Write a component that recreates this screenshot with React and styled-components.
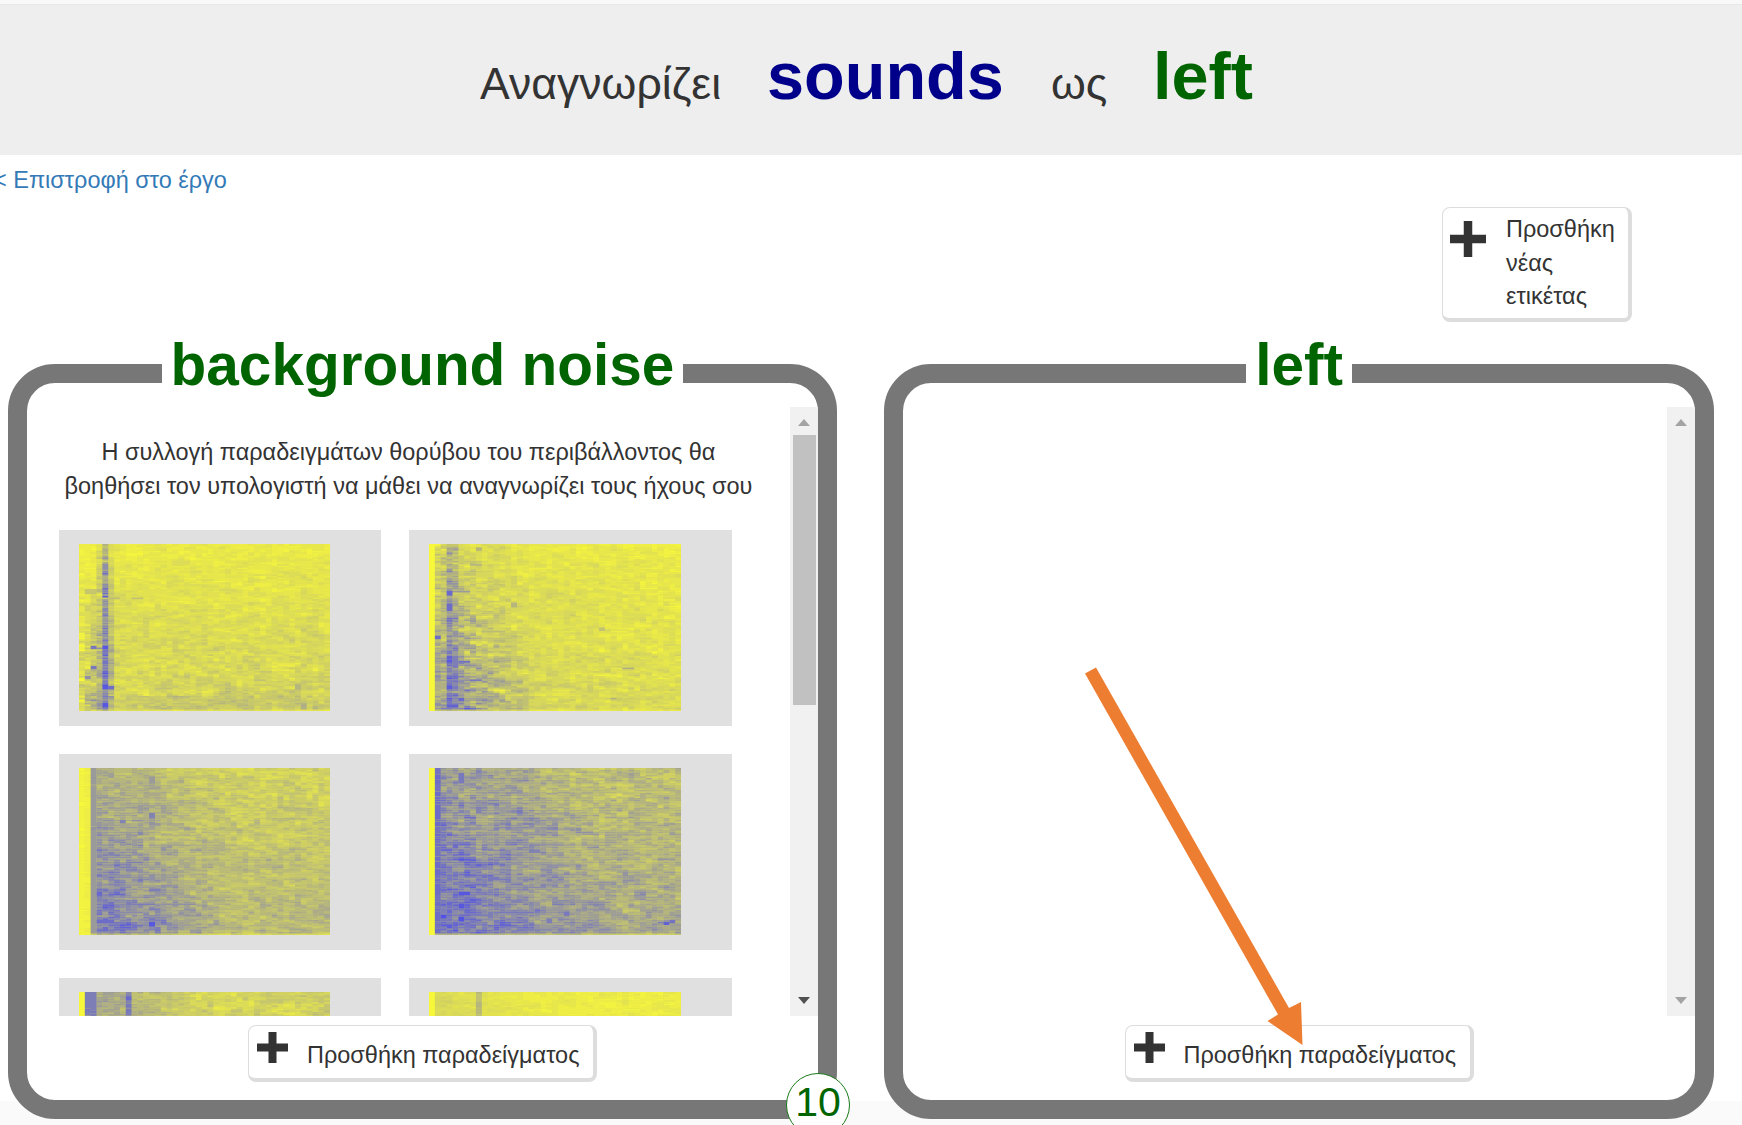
import React from "react";
import styled, { createGlobalStyle } from "styled-components";

const GlobalStyle = createGlobalStyle`
  * { box-sizing: border-box; }
  html, body { margin: 0; padding: 0; background: #fafafa; overflow: hidden; }
  body {
    font-family: "Liberation Sans", Arial, sans-serif;
    font-size: 23.48px;
    line-height: 33.5px;
    color: #333;
  }
`;

const Page = styled.div`
  position: relative;
  width: 1742px;
  height: 1125px;
  overflow: hidden;
`;

const NavEdge = styled.div`
  height: 5px;
  background: #f8f8f8;
  border-bottom: 1px solid #e7e7e7;
`;

const Banner = styled.header`
  display: flex;
  align-items: baseline;
  height: 150px;
  padding: 24px 0 0 480px;
  background: #eee;
  white-space: nowrap;
  line-height: 94px;
`;

const Plain = styled.span`
  font-size: 44.6px;
  width: ${(p) => p.$width}px;
`;

const Strong = styled.strong`
  font-size: 66.6px;
  width: ${(p) => p.$width}px;
  color: ${(p) => p.$color};
`;

const Body = styled.main`
  height: 946px;
  background: #fff;
`;

const BackRow = styled.div`
  height: 52px;
  padding-top: 9px;
`;

const BackLink = styled.a`
  display: inline-block;
  margin-left: -7px;
  color: #337ab7;
  text-decoration: none;
  white-space: nowrap;
`;

const Actions = styled.div`
  display: flex;
  justify-content: flex-end;
  height: 133px;
  padding-right: 110px;
`;

const Button = styled.button`
  display: flex;
  align-items: flex-start;
  width: ${(p) => p.$width}px;
  height: ${(p) => p.$height}px;
  padding: ${(p) => p.$padding};
  gap: ${(p) => p.$gap}px;
  border: 1.5px solid #ddd;
  border-right-width: 4px;
  border-bottom-width: 4px;
  border-radius: 8px;
  background: #fff;
  color: #333;
  font: inherit;
  text-align: left;
`;

const PlusSvg = styled.svg`
  display: block;
  flex: none;
  margin-top: ${(p) => p.$top}px;
`;

const ButtonText = styled.span`
  width: ${(p) => p.$width}px;
  padding-top: ${(p) => p.$top || 0}px;
  white-space: ${(p) => (p.$wrap ? "normal" : "nowrap")};
`;

const Columns = styled.div`
  display: grid;
  grid-template-columns: 829px 830px;
  gap: 47px;
  padding-left: 8px;
`;

const Bucket = styled.fieldset`
  position: relative;
  height: 779px;
  min-width: 0;
  margin: 0;
  padding: 0;
  border: 19px solid #777;
  border-radius: 47px;
`;

const BucketTitle = styled.legend`
  margin: 0 auto;
  padding: 0 9px 17px;
  font-size: 58.5px;
  font-weight: bold;
  line-height: 50px;
  color: #006400;
`;

const ScrollArea = styled.div`
  display: flex;
  height: 609px;
  overflow: hidden;
`;

const ScrollContent = styled.div`
  flex: 1;
  padding-top: 29px;
`;

const Hint = styled.p`
  margin: 0;
  text-align: center;
  white-space: pre-line;
`;

const SampleGrid = styled.div`
  display: grid;
  grid-template-columns: 322px 323px;
  gap: 28px 28px;
  padding: 27px 0 0 32px;
`;

const Sample = styled.div`
  height: 196px;
  padding: 14px 20px;
  background: #e0e0e0;
`;

const Spectrum = styled.svg`
  display: block;
`;

const Track = styled.div`
  display: flex;
  flex-direction: column;
  align-items: center;
  width: 28px;
  padding: 12px 0;
  background: #f1f1f1;
`;

const Arrow = styled.svg`
  display: block;
  flex: none;
  margin-top: ${(p) => (p.$last ? "auto" : "0")};
`;

const Thumb = styled.div`
  width: 23px;
  height: 270px;
  margin-top: 9px;
  background: #c1c1c1;
`;

const Footer = styled.div`
  display: flex;
  justify-content: center;
  padding: 8.5px 0 0;
`;

const Count = styled.div`
  position: absolute;
  right: -32px;
  bottom: -37px;
  width: 64px;
  height: 64px;
  border: 1.5px solid #1a7a1a;
  border-radius: 50%;
  background: #fff;
  color: #006400;
  font-size: 41px;
  line-height: 57px;
  text-align: center;
`;

const Pointer = styled.svg`
  position: absolute;
  left: 1080px;
  top: 660px;
  pointer-events: none;
`;

const COLS = 43;
const ROWS = 100;
const LEVELS = 32;

// Small seeded generator so that every sample keeps its own texture.
function generator(seed) {
  let s = seed;
  return () => {
    s = (s + 0x6d2b79f5) | 0;
    let t = Math.imul(s ^ (s >>> 15), 1 | s);
    t = (t + Math.imul(t ^ (t >>> 7), 61 | t)) ^ t;
    return ((t ^ (t >>> 14)) >>> 0) / 4294967296;
  };
}

// Each profile gives [mean energy, spread] for column c and relative height y.
const profiles = {
  click: (c, y) => {
    if (c === 4) return [0.42 + 0.38 * y, 0.45];
    if (c === 5) return [0.16 + 0.3 * y, 0.35 * y + 0.08];
    if (c === 3) return [0.13 + 0.34 * y, 0.32];
    if (c < 3) return [0.06 + (c + 1) * 0.11 * y * (y > 0.25 ? 1 : 0.2), 0.06 + 0.4 * y];
    return [0.08 + 0.15 * y + (y > 0.9 ? 0.05 : 0), 0.1 + 0.14 * y];
  },
  tap: (c, y) => {
    if (c === 0) return [0, 0.01];
    if (c === 3) return [0.44 + 0.36 * y, 0.4];
    if (c === 4) return [0.34 + 0.36 * y, 0.4];
    if (c < 3) return [0.22 + 0.32 * y, 0.4];
    const fade = Math.max(0, 1 - (c - 4) / 13);
    const far = Math.min(1, Math.max(0, (c - 15) / 27));
    return [0.11 - 0.05 * far + fade * (0.07 + 0.3 * y) + 0.11 * y, 0.11 + 0.08 * y + fade * 0.42 * (0.25 + y)];
  },
  hum: (c, y) => {
    if (c < 2) return [0.02 + 0.03 * c, 0.02];
    if (c === 2) return [0.55, 0.03];
    const fade = Math.max(0, 1 - (c - 3) / 22);
    return [0.22 + 0.18 * y + fade * (0.2 + 0.16 * y), 0.23 + 0.18 * fade * y];
  },
  rush: (c, y) => {
    if (c === 0) return [0, 0.01];
    if (c === 1) return [0.8, 0.06];
    const fade = Math.max(0, 1 - (c - 2) / 26);
    return [0.34 + 0.17 * y + fade * (0.22 + 0.1 * y), 0.28 + 0.08 * fade];
  },
  burst: (c) => {
    if (c === 0) return [0, 0.01];
    if (c < 3) return [0.72, 0.05];
    if (c === 8) return [0.68, 0.2];
    const fade = Math.max(0, 1 - (c - 3) / 19);
    return [0.22 + fade * 0.26, 0.22];
  },
  quiet: (c) => {
    if (c === 0) return [0, 0.01];
    if (c === 8) return [0.36, 0.12];
    const fade = Math.max(0, 1 - c / 20);
    return [0.07 + fade * 0.12, 0.08];
  },
};

// Louder spots: [column, row, columns, rows, energy].
const accents = {
  click: [[4, 31, 1, 1, 0.9], [2, 61, 1, 2, 0.75], [3, 62, 1, 1, 0.6], [4, 61, 1, 2, 0.92], [2, 73, 1, 2, 0.75], [1, 79, 1, 2, 0.6], [4, 84, 1, 3, 0.92], [5, 85, 1, 2, 0.8], [4, 95, 1, 3, 0.92], [37, 84, 1, 3, 0.4], [5, 32, 2, 1, 0.35], [9, 32, 2, 1, 0.32], [1, 27, 2, 3, 0.28], [5, 91, 1, 1, 0.6]],
  tap: [[3, 28, 1, 3, 0.85], [4, 28, 3, 1, 0.55], [3, 36, 1, 4, 0.8], [1, 55, 1, 2, 0.8], [3, 69, 1, 2, 0.92], [5, 70, 2, 1, 0.8], [7, 81, 2, 1, 0.75], [5, 81, 2, 1, 0.6], [3, 85, 1, 2, 0.9], [3, 96, 2, 2, 0.88], [33, 74, 2, 1, 0.42], [29, 50, 1, 2, 0.32], [31, 92, 1, 1, 0.42], [14, 35, 1, 3, 0.4], [8, 2, 1, 2, 0.4], [7, 12, 2, 1, 0.4], [14, 19, 1, 5, 0.24]],
  hum: [[12, 27, 1, 3, 0.68], [12, 92, 1, 3, 0.95], [13, 92, 1, 2, 0.6], [12, 72, 2, 2, 0.72], [4, 31, 2, 1, 0.6], [7, 31, 1, 2, 0.68], [9, 31, 2, 1, 0.62], [8, 81, 5, 1, 0.72], [14, 81, 6, 1, 0.62], [3, 91, 3, 2, 0.8], [6, 86, 5, 1, 0.66], [4, 95, 1, 3, 0.82], [8, 56, 3, 1, 0.7], [12, 5, 1, 4, 0.55]],
  rush: [[5, 3, 1, 6, 0.75], [4, 75, 1, 2, 0.85], [5, 74, 2, 2, 0.92], [5, 81, 1, 3, 0.92], [5, 89, 1, 3, 0.96], [11, 86, 7, 1, 0.75], [39, 92, 1, 1, 0.72], [40, 92, 1, 2, 0.88], [41, 91, 1, 2, 0.76], [20, 90, 1, 3, 0.72], [11, 81, 3, 1, 0.7], [4, 92, 1, 2, 0.85]],
  burst: [[8, 3, 1, 2, 0.85]],
  quiet: [],
};

function tint(t) {
  const rg = Math.round(248 - 172 * t);
  const b = Math.round(58 + 176 * t);
  return `rgb(${rg},${rg},${b})`;
}

function spectrumPaths(kind, seed, width, height) {
  const rand = generator(seed);
  const cw = width / COLS;
  const rh = height / ROWS;
  const paths = Array.from({ length: LEVELS }, () => "");
  const above = new Array(COLS).fill(0);
  for (let r = 0; r < ROWS; r++) {
    let beside = 0;
    for (let c = 0; c < COLS; c++) {
      const fresh = rand() + rand() - 1;
      const noise = fresh * 0.85 + above[c] * 0.42 + beside * 0.26;
      above[c] = noise;
      beside = noise;
      const [mean, spread] = profiles[kind](c, r / ROWS);
      let t = mean + noise * spread * 0.65;
      if (r > ROWS - 2) t *= 0.5;
      for (const [ac, ar, aw, ah, at] of accents[kind]) {
        if (c >= ac && c < ac + aw && r >= ar && r < ar + ah) t = at;
      }
      const level = Math.max(0, Math.min(LEVELS - 1, Math.round(t * (LEVELS - 1))));
      const x = (c * cw).toFixed(2);
      const y = (r * rh).toFixed(2);
      paths[level] += `M${x} ${y}h${(cw + 0.1).toFixed(2)}v${(rh + 0.1).toFixed(2)}h-${(cw + 0.1).toFixed(2)}z`;
    }
  }
  return paths;
}

function Spectrogram({ kind, seed, width }) {
  const height = 167;
  const paths = React.useMemo(() => spectrumPaths(kind, seed, width, height), [kind, seed, width]);
  return (
    <Spectrum width={width} height={height} viewBox={`0 0 ${width} ${height}`}>
      <rect width={width} height={height} fill={tint(0.15)} />
      {paths.map((d, i) => (d ? <path key={i} d={d} fill={tint(i / (LEVELS - 1))} /> : null))}
    </Spectrum>
  );
}

function Plus({ width, height, bar, top }) {
  return (
    <PlusSvg width={width} height={height} $top={top}>
      <rect x={(width - bar) / 2} width={bar} height={height} fill="#333" />
      <rect y={(height - bar) / 2} width={width} height={bar} fill="#333" />
    </PlusSvg>
  );
}

function Scrollbar({ thumb }) {
  return (
    <Track>
      <Arrow width="12" height="7"><path d="M0 7L6 0L12 7z" fill="#a3a3a3" /></Arrow>
      {thumb && <Thumb />}
      <Arrow $last width="12" height="7"><path d="M0 0L6 7L12 0z" fill={thumb ? "#505050" : "#a3a3a3"} /></Arrow>
    </Track>
  );
}

const samples = [
  { kind: "click", seed: 11 },
  { kind: "tap", seed: 27 },
  { kind: "hum", seed: 35 },
  { kind: "rush", seed: 48 },
  { kind: "burst", seed: 52 },
  { kind: "quiet", seed: 66 },
];

function TrainingBucket({ title, hint, items = [], count }) {
  return (
    <Bucket>
      <BucketTitle>{title}</BucketTitle>
      <ScrollArea>
        <ScrollContent>
          {hint && <Hint>{hint}</Hint>}
          {items.length > 0 && (
            <SampleGrid>
              {items.map((s, i) => (
                <Sample key={s.seed}>
                  <Spectrogram kind={s.kind} seed={s.seed} width={i % 2 ? 252 : 251} />
                </Sample>
              ))}
            </SampleGrid>
          )}
        </ScrollContent>
        <Scrollbar thumb={items.length > 0} />
      </ScrollArea>
      <Footer>
        <Button $width={349} $height={57} $padding="6px 0 0 8px" $gap={19}>
          <Plus width={31} height={31} bar={8} top={0} />
          <ButtonText $width={280} $top={7}>Προσθήκη παραδείγματος</ButtonText>
        </Button>
      </Footer>
      {count && <Count>{count}</Count>}
    </Bucket>
  );
}

export default function App() {
  return (
    <Page>
      <GlobalStyle />
      <NavEdge />
      <Banner>
        <Plain $width={287}>Αναγνωρίζει</Plain>
        <Strong $width={284} $color="#00008b">sounds</Strong>
        <Plain $width={102}>ως</Plain>
        <Strong $width={110} $color="#006400">left</Strong>
      </Banner>
      <Body>
        <BackRow>
          <BackLink>&lt; Επιστροφή στο έργο</BackLink>
        </BackRow>
        <Actions>
          <Button $width={190} $height={115} $padding="5px 0 0 7px" $gap={20}>
            <Plus width={36} height={36} bar={8.5} top={8} />
            <ButtonText $width={112} $wrap>Προσθήκη νέας ετικέτας</ButtonText>
          </Button>
        </Actions>
        <Columns>
          <TrainingBucket
            title="background noise"
            hint={"Η συλλογή παραδειγμάτων θορύβου του περιβάλλοντος θα\nβοηθήσει τον υπολογιστή να μάθει να αναγνωρίζει τους ήχους σου"}
            items={samples}
            count={10}
          />
          <TrainingBucket title="left" />
        </Columns>
      </Body>
      <Pointer width="230" height="390" viewBox="1080 660 230 390">
        <path d="M1085 673.5L1096 667.5L1289 1008L1301 1002L1302.5 1045L1267.5 1021L1278 1014.5z" fill="#ed7d31" />
      </Pointer>
    </Page>
  );
}
